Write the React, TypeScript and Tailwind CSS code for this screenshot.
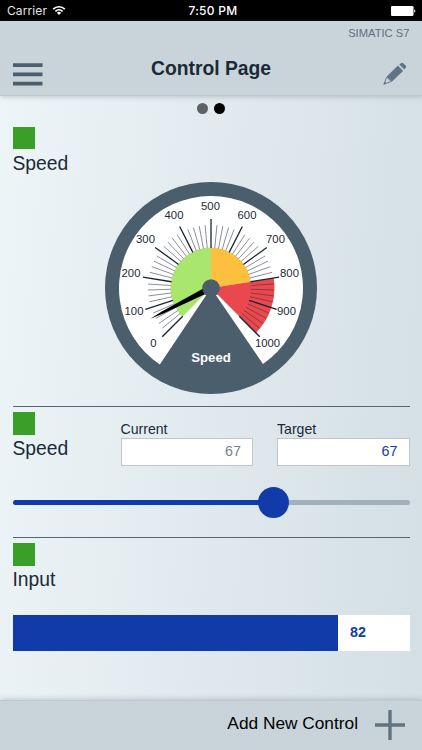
import { ReactNode } from "react";

interface IControlLabelProps {
  label: string;
}

interface IFieldProps {
  label: string;
  value: number;
  valueClassName: string;
}

interface IGaugeProps {
  label: string;
  value: number;
}

const CENTER = 106;
const START_ANGLE = -135;
const DEGREES_PER_UNIT = 0.27;

const scale = [
  { value: 0, x: 48.5, y: 161.5 },
  { value: 100, x: 29, y: 129.5 },
  { value: 200, x: 26, y: 92 },
  { value: 300, x: 40.5, y: 57.5 },
  { value: 400, x: 69, y: 33.5 },
  { value: 500, x: 105.5, y: 24.8 },
  { value: 600, x: 142, y: 33.5 },
  { value: 700, x: 170.5, y: 57.5 },
  { value: 800, x: 184.5, y: 92 },
  { value: 900, x: 181.5, y: 129.5 },
  { value: 1000, x: 162.5, y: 161.5 },
];

function toAngle(value: number): number {
  return START_ANGLE + value * DEGREES_PER_UNIT;
}

function point(angle: number, radius: number): string {
  const radians = (angle * Math.PI) / 180;
  const x = CENTER + radius * Math.sin(radians);
  const y = CENTER - radius * Math.cos(radians);

  return `${x.toFixed(2)} ${y.toFixed(2)}`;
}

function sector(from: number, to: number, radius: number): string {
  const largeArc = to - from > 180 ? 1 : 0;

  return `M${CENTER} ${CENTER}L${point(from, radius)}A${radius} ${radius} 0 ${largeArc} 1 ${point(to, radius)}Z`;
}

function StatusBar(): ReactNode {
  return (
    <div className="grid h-[21px] shrink-0 grid-cols-3 items-center bg-black pr-1.5 pl-[7px] font-[Inter,sans-serif] text-[12px] text-white">
      <div className="flex items-center gap-[5px]">
        <span className="tracking-[0.1px] text-[#e4e4e4]">Carrier</span>
        <svg width="14" height="11" viewBox="0 0 14 11" fill="none">
          <path
            d="M1.2 4.1a8.3 8.3 0 0 1 11.6 0M3.4 6.3a5.2 5.2 0 0 1 7.2 0"
            stroke="white"
            strokeWidth="1.7"
          />
          <path d="M4.9 7.8a3 3 0 0 1 4.2 0L7 10Z" fill="white" />
        </svg>
      </div>
      <span className="pt-px pl-[3px] text-center text-[12px] font-medium tracking-[0.3px]">
        7:50 PM
      </span>
      <svg className="justify-self-end" width="25" height="10" viewBox="0 0 25 10">
        <rect width="22.5" height="10" rx="1.3" fill="white" />
        <path d="M23.2 3.4a1.7 1.7 0 0 1 0 3.2Z" fill="white" />
      </svg>
    </div>
  );
}

function Header(): ReactNode {
  return (
    <header className="z-10 flex h-[75px] shrink-0 flex-col border-b border-[#bdc8cf] bg-[#c9d4da] px-[12.5px] shadow-[0_1px_5px_rgba(90,105,115,0.3)]">
      <span className="pt-1 text-right text-[11.2px] leading-4 text-[#5f6f7c]">
        SIMATIC S7
      </span>
      <div className="grid grid-cols-[30px_1fr_30px] items-start">
        <svg className="mt-[21.5px]" width="30" height="23" viewBox="0 0 30 23">
          <path
            d="M0 2.2h29.5M0 11.4h29.5M0 20.6h29.5"
            stroke="#4b5f6f"
            strokeWidth="3.8"
          />
        </svg>
        <h1 className="mt-[15px] text-center text-[19.3px] leading-[26px] font-bold text-[#1b2a38]">
          Control Page
        </h1>
        <svg
          className="mt-[21px] mr-0.5 justify-self-end"
          width="26"
          height="24"
          viewBox="0 0 26 24"
          fill="#607486"
        >
          <path d="M16 3.6 21.1 8.9 9.8 19.8 4.7 14.6Z" />
          <path d="M17.3 2.6 19.3 1Q20.3.3 21.2 1.2L23.8 3.8Q24.7 4.8 23.8 5.8L22.3 7.6Z" />
          <path
            d="M4.7 15.1 9.2 19.6 2 22.1Z"
            fill="none"
            stroke="#607486"
            strokeWidth="0.9"
          />
          <path d="M2.8 19.6 4.4 21.2 1.3 22.8Z" />
        </svg>
      </div>
    </header>
  );
}

function ControlLabel({ label }: IControlLabelProps): ReactNode {
  return (
    <div>
      <div className="size-[22.5px] bg-[#3a9f28]" />
      <h2 className="mt-[0.5px] text-[19.3px] leading-[28px] text-[#1b2a38]">
        {label}
      </h2>
    </div>
  );
}

function Gauge({ label, value }: IGaugeProps): ReactNode {
  const ticks = Array.from({ length: 51 }, (_, index) => index * 20);

  return (
    <svg
      width="212"
      height="212"
      viewBox="0 0 212 212"
      fontFamily="'Liberation Sans', sans-serif"
    >
      <circle cx={CENTER} cy={CENTER} r="106" fill="#4b5e6b" />
      <path d={sector(-146.2, 145.6, 92)} fill="white" />
      <path d={sector(-135, 0, 40.5)} fill="#a8e66e" />
      <path d={sector(0, 81, 40.5)} fill="#fcc03e" />
      <path d={sector(81, 135, 63.5)} fill="#e9484f" />
      {ticks.map((tick) => {
        const isMajor = tick % 100 === 0;
        const angle = toAngle(tick);
        const minorColor = tick > 800 ? "#8f3940" : "#8b8f97";

        return (
          <path
            key={tick}
            d={`M${point(angle, 40)}L${point(angle, isMajor ? 69 : 63)}`}
            stroke={isMajor ? "#172433" : minorColor}
            strokeWidth={isMajor ? 1.3 : 1}
          />
        );
      })}
      {scale.map(({ value: mark, x, y }) => (
        <text
          key={mark}
          x={x}
          y={y}
          dy="3.4"
          textAnchor="middle"
          fontSize="11.3"
          fill="#1b2a38"
        >
          {mark}
        </text>
      ))}
      <path
        d="M102.9 103 104.7 52 106 38 107.4 52 109.1 103Z"
        fill="black"
        transform={`rotate(${toAngle(value)} ${CENTER} ${CENTER})`}
      />
      <circle cx={CENTER} cy={CENTER} r="8.8" fill="#4b5e6b" />
      <text
        x={CENTER}
        y="179.5"
        textAnchor="middle"
        fontSize="13.2"
        fontWeight="bold"
        fill="white"
      >
        {label}
      </text>
    </svg>
  );
}

function Field({ label, value, valueClassName }: IFieldProps): ReactNode {
  return (
    <div className="w-[132.5px]">
      <div className="text-[14.1px] leading-[17px] text-[#1b2a38]">{label}</div>
      <div
        className={`flex h-7 items-center justify-end border border-[#bfc5c9] bg-white pr-[11px] text-[14.3px] ${valueClassName}`}
      >
        {value}
      </div>
    </div>
  );
}

function Slider(): ReactNode {
  return (
    <div className="mt-[21.5px] flex h-[30px] items-center">
      <div className="h-[5px] w-[249px] rounded-l-full bg-[#103ba9]" />
      <div className="z-10 -mx-1 size-[31px] shrink-0 rounded-full bg-[#103ba9]" />
      <div className="h-[5px] flex-1 rounded-r-full bg-[#a2b0bb]" />
    </div>
  );
}

export default function App(): ReactNode {
  return (
    <div className="flex h-[750px] w-[422px] flex-col overflow-hidden bg-[linear-gradient(95deg,#edf5f7_0%,#e1eaee_48%,#d3dfe5_100%)] font-['Liberation_Sans',Arial,sans-serif]">
      <StatusBar />
      <Header />

      <main className="flex flex-1 flex-col px-[12.5px]">
        <div className="flex justify-center gap-1.5 pt-[7px]">
          <span className="size-[11px] rounded-full bg-[#5f6366]" />
          <span className="size-[11px] rounded-full bg-black" />
        </div>

        <section className="mt-[12.5px] flex h-[280.5px] flex-col border-b border-[#566773]">
          <ControlLabel label="Speed" />
          <div className="mt-[4.5px] flex justify-center pr-px">
            <Gauge label="Speed" value={67} />
          </div>
        </section>

        <section className="h-[131px] border-b border-[#566773] pt-[5px]">
          <div className="flex justify-between">
            <ControlLabel label="Speed" />
            <div className="flex gap-6 pt-[9px]">
              <Field
                label="Current"
                value={67}
                valueClassName="text-[#75818c]"
              />
              <Field label="Target" value={67} valueClassName="text-[#103ba9]" />
            </div>
          </div>
          <Slider />
        </section>

        <section className="pt-[5px]">
          <ControlLabel label="Input" />
          <div className="mt-[21px] flex h-9 items-center bg-white">
            <div className="h-full w-[82%] bg-[#103ba9]" />
            <span className="ml-3 text-[14.3px] font-bold text-[#103ba9]">
              82
            </span>
          </div>
        </section>
      </main>

      <footer className="z-10 flex h-[50px] shrink-0 items-start justify-end gap-[17px] border-t border-[#bdc8cf] bg-[#c9d4da] pt-[9px] pr-[17px] shadow-[0_-1px_5px_rgba(90,105,115,0.3)]">
        <span className="text-[17.3px] leading-[26px] text-black">
          Add New Control
        </span>
        <svg width="30" height="30" viewBox="0 0 30 30">
          <path d="M0 15h30M15 0v30" stroke="#607380" strokeWidth="3.4" />
        </svg>
      </footer>
    </div>
  );
}
